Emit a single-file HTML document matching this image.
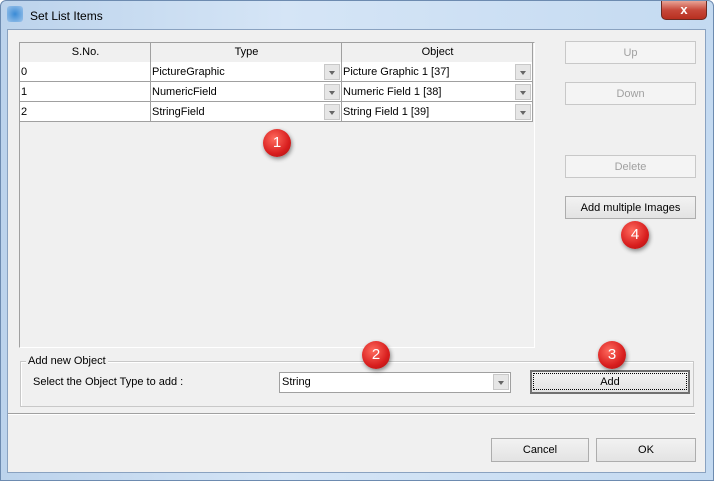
<!DOCTYPE html>
<html><head><style>
*{box-sizing:border-box}
body{margin:0;width:714px;height:481px;overflow:hidden;font-family:"Liberation Sans",sans-serif;font-size:11px;background:#fff}
.win{position:absolute;left:0;top:0;width:714px;height:481px;background:linear-gradient(90deg,#bcd3ec,#d5e5f6 40%,#c4daf1);border:1px solid #6d8bb0;border-radius:6px 6px 0 0}
.title{position:absolute;left:29px;top:8px;font-size:12px;color:#000}
.ico{position:absolute;left:6px;top:5px;width:16px;height:16px;border-radius:3px;background:radial-gradient(#3a8bd6,#9ec4ea)}
.close{position:absolute;left:660px;top:0;width:46px;height:19px;border:1px solid #6b2a22;border-top:none;border-radius:0 0 5px 5px;background:linear-gradient(#e8a496,#c7483a 50%,#b82f20);color:#fff;font-weight:bold;text-align:center;font-size:13px;line-height:18px}
.client{position:absolute;left:7px;top:29px;width:699px;height:444px;background:#f0f0f0;border:1px solid #8aa2c0}
.a{position:absolute}
.grid{left:19px;top:42px;width:516px;height:306px;background:#f0f0f0;border:1px solid #a0a0a0;border-right-color:#fff;border-bottom-color:#fff}
.cell{position:absolute;background:#fff;border-right:1px solid #a0a0a0;border-bottom:1px solid #a0a0a0;height:20px;line-height:21px;padding-left:1px;white-space:nowrap}
.hd{background:#f0f0f0;text-align:center;border:1px solid #a0a0a0;border-top:none;border-left:none;line-height:19px}
.dd{position:absolute;right:1px;top:2px;width:16px;height:16px;background:#e6e6e6;border:1px solid #c8c8c8}
.dd:after{content:"";position:absolute;left:4px;top:6px;border:3px solid transparent;border-top:4px solid #666}
.btn{position:absolute;border:1px solid #adadad;background:linear-gradient(#f2f2f2,#e3e3e3);text-align:center;line-height:22px;color:#000}
.dis{color:#a0a0a0;border-color:#c8c8c8;background:#f4f4f4}
.badge{position:absolute;width:28px;height:28px;border-radius:50%;background:radial-gradient(circle at 40% 35%,#ff6b5e,#d81e1e 60%,#a31010);color:#fff;font-size:15px;text-align:center;line-height:28px;box-shadow:1px 2px 4px rgba(0,0,0,.45)}
</style></head><body>
<div class="win">
<div class="ico"></div><div class="title">Set List Items</div>
<div class="close">x</div>
</div>
<div class="client"></div>
<div class="a grid"></div>
<div class="cell hd" style="left:20px;top:43px;width:131px">S.No.</div>
<div class="cell hd" style="left:151px;top:43px;width:191px">Type</div>
<div class="cell hd" style="left:342px;top:43px;width:191px">Object</div>

<div class="cell" style="left:20px;top:62px;width:131px">0</div>
<div class="cell" style="left:151px;top:62px;width:191px">PictureGraphic<span class="dd"></span></div>
<div class="cell" style="left:342px;top:62px;width:191px">Picture Graphic 1 [37]<span class="dd"></span></div>
<div class="cell" style="left:20px;top:82px;width:131px">1</div>
<div class="cell" style="left:151px;top:82px;width:191px">NumericField<span class="dd"></span></div>
<div class="cell" style="left:342px;top:82px;width:191px">Numeric Field 1 [38]<span class="dd"></span></div>
<div class="cell" style="left:20px;top:102px;width:131px">2</div>
<div class="cell" style="left:151px;top:102px;width:191px">StringField<span class="dd"></span></div>
<div class="cell" style="left:342px;top:102px;width:191px">String Field 1 [39]<span class="dd"></span></div>

<div class="btn dis" style="left:565px;top:41px;width:131px;height:23px">Up</div>
<div class="btn dis" style="left:565px;top:82px;width:131px;height:23px">Down</div>
<div class="btn dis" style="left:565px;top:155px;width:131px;height:23px">Delete</div>
<div class="btn" style="left:565px;top:196px;width:131px;height:23px">Add multiple Images</div>

<div class="a" style="left:20px;top:361px;width:674px;height:46px;border:1px solid #c8c8c8;box-shadow:inset 1px 1px 0 #fff"></div>
<div class="a" style="left:26px;top:355px;background:#f0f0f0;padding:0 2px">Add new Object</div>
<div class="a" style="left:33px;top:376px">Select the Object Type to add :</div>
<div class="a" style="left:279px;top:372px;width:232px;height:21px;background:#fff;border:1px solid #a0a0a0;line-height:19px;padding-left:2px">String<span class="dd" style="top:1px"></span></div>
<div class="btn" style="left:530px;top:370px;width:160px;height:24px;border:2px solid #707070;line-height:19px"><div style="border:1px dotted #000;margin:1px;height:17px;line-height:16px">Add</div></div>

<div class="a" style="left:8px;top:413px;width:687px;height:2px;border-top:1px solid #a0a0a0;border-bottom:1px solid #fff"></div>
<div class="btn" style="left:491px;top:438px;width:98px;height:24px">Cancel</div>
<div class="btn" style="left:596px;top:438px;width:100px;height:24px">OK</div>

<div class="badge" style="left:263px;top:129px">1</div>
<div class="badge" style="left:362px;top:341px">2</div>
<div class="badge" style="left:598px;top:341px">3</div>
<div class="badge" style="left:621px;top:221px">4</div>
</body></html>
